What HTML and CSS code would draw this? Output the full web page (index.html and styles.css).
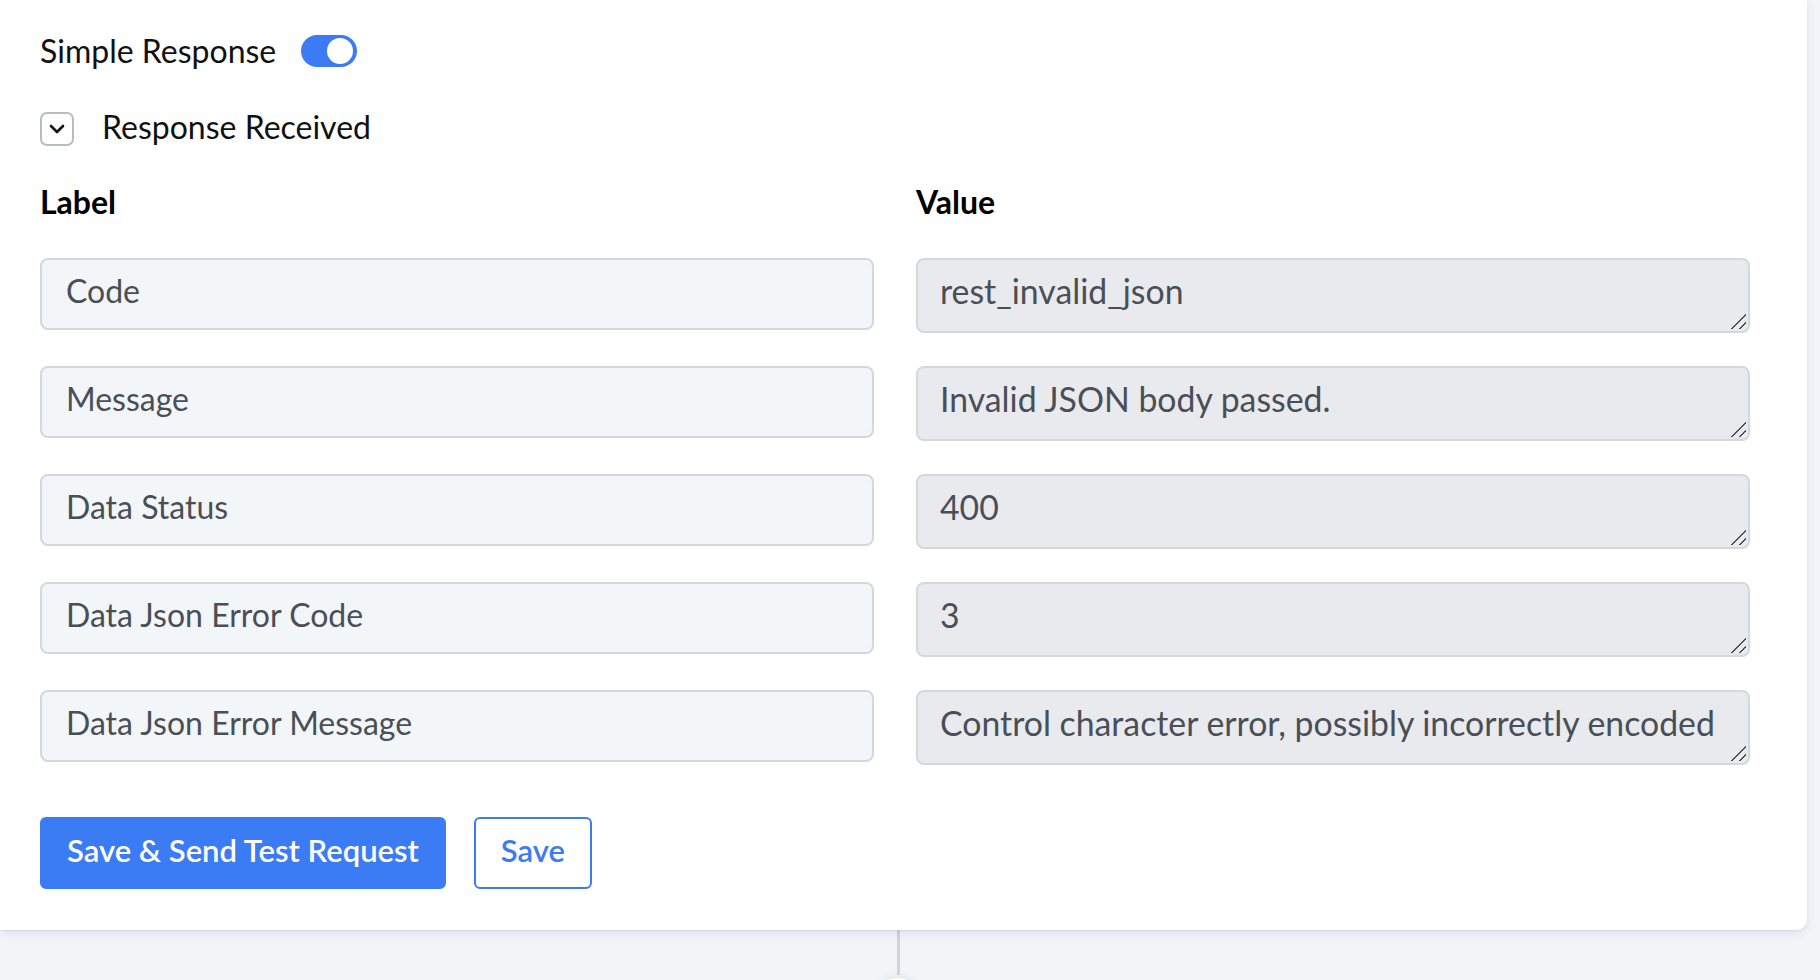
FILE: index.html
```html
<!DOCTYPE html>
<html lang="en">
<head>
<meta charset="utf-8">
<title>Response Mapping</title>
<link rel="stylesheet" href="styles.css">
</head>
<body>
<main class="canvas">
  <section class="card">
    <div class="switch-row">
      <span class="switch-label">Simple Response</span>
      <span class="toggle is-on" role="switch" aria-checked="true"><span class="knob"></span></span>
    </div>

    <div class="collapse-row">
      <span class="chevron-box">
        <svg width="18" height="12" viewBox="0 0 18 12" aria-hidden="true">
          <path d="M3 3l6 6 6-6" fill="none" stroke="#111" stroke-width="2.6" stroke-linecap="round" stroke-linejoin="round"/>
        </svg>
      </span>
      <span class="collapse-label">Response Received</span>
    </div>

    <div class="map-grid">
      <div class="col-head">Label</div>
      <div class="col-head">Value</div>

      <input class="field" type="text" value="Code">
      <textarea class="value" readonly>rest_invalid_json</textarea>

      <input class="field" type="text" value="Message">
      <textarea class="value" readonly>Invalid JSON body passed.</textarea>

      <input class="field" type="text" value="Data Status">
      <textarea class="value" readonly>400</textarea>

      <input class="field" type="text" value="Data Json Error Code">
      <textarea class="value" readonly>3</textarea>

      <input class="field" type="text" value="Data Json Error Message">
      <textarea class="value" readonly>Control character error, possibly incorrectly encoded</textarea>
    </div>

    <div class="actions">
      <button class="btn btn-primary" type="button">Save &amp; Send Test Request</button>
      <button class="btn btn-outline" type="button">Save</button>
    </div>
  </section>

  <div class="connector">
    <span class="connector-line"></span>
    <span class="connector-node"></span>
  </div>
</main>
</body>
</html>
```

FILE: styles.css
```css
* {
  box-sizing: border-box;
}

html, body {
  margin: 0;
  height: 100%;
}

body {
  background: #f2f5f8;
  font-family: "Lato", "Noto Sans", sans-serif;
  color: #111;
  overflow: hidden;
}

.canvas {
  width: 1807px;
}

/* main white panel */
.card {
  background: #fff;
  border-radius: 0 0 10px 0;
  box-shadow: 0 3px 10px rgba(30, 40, 60, 0.10), 0 1px 2px rgba(30, 40, 60, 0.06);
  padding: 35px 57px 41px 40px;
  position: relative;
  z-index: 1;
}

.switch-row {
  display: flex;
  align-items: center;
  gap: 25px;
  height: 32px;
}

.switch-label,
.collapse-label {
  font-size: 32px;
  line-height: 36px;
}

.collapse-label {
  margin-top: -4px;
}

.toggle {
  width: 56px;
  height: 32px;
  border-radius: 16px;
  background: #3b7cf4;
  position: relative;
  display: inline-block;
}

.toggle .knob {
  position: absolute;
  top: 3px;
  right: 4px;
  width: 26px;
  height: 26px;
  border-radius: 50%;
  background: #fff;
}

.collapse-row {
  display: flex;
  align-items: center;
  gap: 28px;
  margin-top: 45px;
  height: 34px;
}

.chevron-box {
  width: 34px;
  height: 34px;
  border: 2px solid #b6bcc6;
  border-radius: 7px;
  display: flex;
  align-items: center;
  justify-content: center;
}

.map-grid {
  display: grid;
  grid-template-columns: 1fr 1fr;
  column-gap: 42px;
  row-gap: 33px;
  margin-top: 38px;
  align-items: start;
}

.col-head {
  font-size: 32px;
  line-height: 36px;
  font-weight: 700;
  color: #000;
  margin-bottom: 5px;
}

.field,
.value {
  font-family: inherit;
  color: #4a4f57;
  border: 2px solid #d4d8de;
  border-radius: 8px;
  width: 100%;
  margin: 0;
  outline: none;
}

.field {
  font-size: 32px;
  line-height: 36px;
  height: 72px;
  background: #f3f6f9;
  padding: 0 24px 8px;
}

/* read-only values with a drawn resize grip in the corner */
.value {
  display: block;
  font-size: 33.8px;
  line-height: 40px;
  height: 75px;
  padding: 11px 22px 0;
  resize: none;
  overflow: hidden;
  white-space: nowrap;
  background-color: #e9eaee;
  background-image: linear-gradient(135deg,
    transparent 0 47%, #4d4f54 47% 55%, transparent 55% 74%,
    #4d4f54 74% 82%, transparent 82%);
  background-size: 15px 15px;
  background-position: right 2px bottom 2px;
  background-repeat: no-repeat;
}

.actions {
  display: flex;
  gap: 28px;
  margin-top: 52px;
}

.btn {
  font-family: inherit;
  font-size: 31px;
  font-weight: 600;
  height: 72px;
  border-radius: 6px;
  padding: 0 25px 6px;
  cursor: pointer;
}

.btn-primary {
  background: #3b7cf4;
  color: #fff;
  border: 2px solid #3b7cf4;
}

.btn-outline {
  background: #fff;
  color: #3b7cf4;
  border: 2px solid #3b7cf4;
}

/* link to the next step below */
.connector {
  display: flex;
  flex-direction: column;
  align-items: center;
  width: 1796px;
}

.connector-line {
  width: 3px;
  height: 45px;
  background: #d1d5da;
}

.connector-node {
  width: 48px;
  height: 48px;
  border-radius: 50%;
  background: #fff;
  margin-top: 3px;
  box-shadow: 0 0 10px rgba(30, 40, 60, 0.12);
}
```
